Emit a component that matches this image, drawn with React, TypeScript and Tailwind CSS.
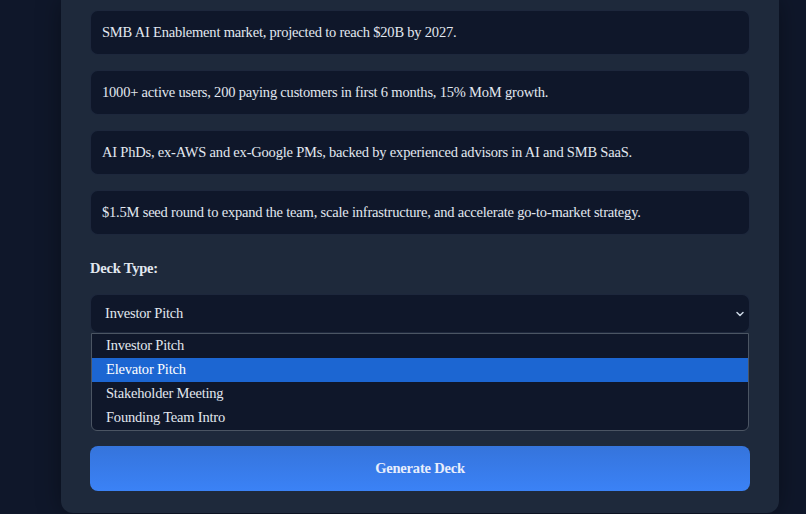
import { ChevronDown } from 'lucide-react';

const fields = [
    'SMB AI Enablement market, projected to reach $20B by 2027.',
    '1000+ active users, 200 paying customers in first 6 months, 15% MoM growth.',
    'AI PhDs, ex-AWS and ex-Google PMs, backed by experienced advisors in AI and SMB SaaS.',
    '$1.5M seed round to expand the team, scale infrastructure, and accelerate go-to-market strategy.',
];

const deckTypes = ['Investor Pitch', 'Elevator Pitch', 'Stakeholder Meeting', 'Founding Team Intro'];

export default function App() {
    return (
        <div className="h-[514px] overflow-hidden bg-[#0f172a] font-['Liberation_Serif',serif] text-[14.5px] tracking-[-0.2px] text-slate-200">
            <div className="mx-[61px] w-[718px] rounded-b-xl bg-[#1e293b] px-[29px] pt-[10px] pb-[22px] shadow-[0_0_24px_rgba(0,0,0,0.35)]">
                <div className="flex flex-col gap-[15px]">
                    {fields.map((text, idx) => (
                        <div key={idx} className="h-[45px] flex items-center rounded-lg border border-slate-700/40 bg-[#0f172a] px-[11px]">
                            {text}
                        </div>
                    ))}
                </div>

                <div className="mt-[22px] font-bold leading-[22px]">Deck Type:</div>

                <div className="relative mt-[15px]">
                    <div className="h-[39px] flex items-center justify-between rounded-lg border border-slate-700/40 bg-[#0f172a] pl-[14px] pr-[3px]">
                        <span>Investor Pitch</span>
                        <ChevronDown size={12} strokeWidth={3} className="text-slate-300" />
                    </div>

                    <div className="absolute left-[1px] right-[1px] top-[39px] z-10 rounded-b-md border border-[#4b5563] bg-[#0f172a]">
                        {deckTypes.map((t) => (
                            <div
                                key={t}
                                className={`h-[24px] flex items-center pl-[14px] ${t === 'Elevator Pitch' ? 'bg-[#1c66d2] text-white' : ''}`}
                            >
                                {t}
                            </div>
                        ))}
                    </div>
                </div>

                {/* second field sits under the open list */}
                <div className="mt-[22px] h-[22px]" />
                <div className="mt-[14px] h-[39px] rounded-lg border border-slate-700/40 bg-[#0f172a]" />

                <button className="mt-[16px] h-[45px] w-full rounded-lg bg-gradient-to-b from-[#3574dc] to-[#3b82f6] font-bold text-[#e8eefc]">
                    Generate Deck
                </button>
            </div>
        </div>
    );
}
